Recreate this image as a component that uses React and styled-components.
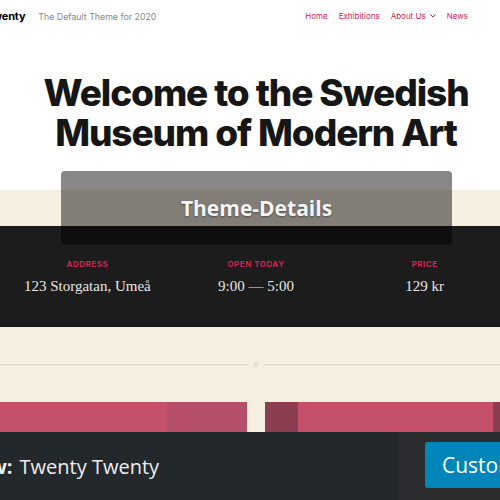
import styled, { createGlobalStyle } from 'styled-components';

const Global = createGlobalStyle`
  html, body { margin: 0; padding: 0; }
  body { width: 500px; height: 500px; overflow: hidden; background: #fff; }
`;

const Screen = styled.div`
  width: 500px;
  height: 500px;
  display: flex;
  flex-direction: column;
  overflow: hidden;
  position: relative;
`;

const Site = styled.div`
  flex: 1;
  width: 512px;
  overflow: hidden;
  position: relative;
`;

const Header = styled.header`
  height: 32px;
  display: flex;
  align-items: center;
  font-family: Inter, "Liberation Sans", sans-serif;
  font-size: 8px;
  padding-right: 44px;
`;

const SiteTitle = styled.div`
  font-weight: 700;
  font-size: 11px;
  color: #000;
  margin-left: -55px;
  letter-spacing: -0.2px;
`;

const Tagline = styled.div`
  color: #888;
  font-size: 8.8px;
  margin-left: 13px;
`;

const Nav = styled.nav`
  margin-left: auto;
  display: flex;
  gap: 11px;
  color: #cd2653;
`;

const NavItem = styled.span`
  display: flex;
  align-items: center;
  gap: 4px;
`;

const Hero = styled.div`
  padding: 41px 0 37px;
  text-align: center;
`;

const Title = styled.h1`
  margin: 0;
  font-family: Inter, "Liberation Sans", sans-serif;
  font-weight: 800;
  font-size: 37px;
  line-height: 40px;
  letter-spacing: -1.1px;
  color: #161616;
`;

const Cream = styled.div`
  background: #f5efe0;
  padding-top: 36px;
`;

const InfoBand = styled.div`
  background: #1c1c1c;
  height: 101px;
  display: grid;
  grid-template-columns: repeat(3, 1fr);
  padding: 0 3px;
  box-sizing: border-box;
`;

const InfoCol = styled.div`
  display: flex;
  flex-direction: column;
  align-items: center;
  padding-top: 33px;
`;

const InfoLabel = styled.div`
  font-family: Inter, "Liberation Sans", sans-serif;
  font-weight: 700;
  font-size: 8px;
  letter-spacing: 0.5px;
  color: #cd2653;
`;

const InfoValue = styled.div`
  font-family: "Liberation Serif", serif;
  font-size: 15px;
  color: #e6e6e6;
  margin-top: 9px;
`;

const DividerRow = styled.div`
  height: 75px;
  display: flex;
  align-items: center;
  gap: 6px;
  color: #c8c2b2;
  font-family: "Liberation Sans", sans-serif;
  font-size: 8px;
  font-style: italic;
`;

const Line = styled.div`
  flex: 1;
  height: 1px;
  background: #dcd7ca;
`;

const Cover = styled.div`
  display: flex;
  height: 40px;
`;

const Block = styled.div`
  width: ${p => p.w}px;
  background: ${p => p.c};
  flex-shrink: 0;
`;

const Overlay = styled.div`
  position: absolute;
  left: 61px;
  top: 171px;
  width: 391px;
  height: 74px;
  border-radius: 4px;
  background: rgba(0, 0, 0, 0.47);
  display: flex;
  align-items: center;
  justify-content: center;
  font-family: "Open Sans", "Noto Sans", sans-serif;
  font-weight: 700;
  font-size: 21px;
  color: #f4f4f4;
  text-shadow: 0 1px 2px rgba(0,0,0,0.4);
`;

const Footer = styled.footer`
  height: 68px;
  flex-shrink: 0;
  display: flex;
  background: #23282d;
`;

const FooterName = styled.div`
  flex: 1;
  display: flex;
  align-items: center;
  font-family: "Open Sans", "Noto Sans", sans-serif;
  font-size: 20px;
  color: #eee;
  margin-left: -73px;
  white-space: pre;
  b { font-weight: 700; margin-right: 7px; }
`;

const FooterActions = styled.div`
  width: 103px;
  background: #2a2c2e;
  display: flex;
  align-items: center;
  padding-left: 28px;
  box-sizing: border-box;
  overflow: hidden;
`;

const CustomizeButton = styled.button`
  flex-shrink: 0;
  height: 46px;
  padding: 0 17px;
  border: none;
  border-radius: 3px;
  background: #0085ba;
  color: #fff;
  font-family: "Open Sans", "Noto Sans", sans-serif;
  font-size: 21px;
  margin-top: -2px;
`;

const Chevron = () => (
  <svg width="6" height="4" viewBox="0 0 6 4">
    <path d="M0.5 0.5 L3 3 L5.5 0.5" fill="none" stroke="#cd2653" strokeWidth="1" />
  </svg>
);

export default function App() {
  return (
    <>
      <Global />
      <Screen>
        <Site>
          <Header>
            <SiteTitle>Twenty Twenty</SiteTitle>
            <Tagline>The Default Theme for 2020</Tagline>
            <Nav>
              <NavItem>Home</NavItem>
              <NavItem>Exhibitions</NavItem>
              <NavItem>About Us <Chevron /></NavItem>
              <NavItem>News</NavItem>
            </Nav>
          </Header>
          <Hero>
            <Title>Welcome to the Swedish<br />Museum of Modern Art</Title>
          </Hero>
          <Cream>
            <InfoBand>
              <InfoCol>
                <InfoLabel>ADDRESS</InfoLabel>
                <InfoValue>123 Storgatan, Umeå</InfoValue>
              </InfoCol>
              <InfoCol>
                <InfoLabel>OPEN TODAY</InfoLabel>
                <InfoValue>9:00 — 5:00</InfoValue>
              </InfoCol>
              <InfoCol>
                <InfoLabel>PRICE</InfoLabel>
                <InfoValue>129 kr</InfoValue>
              </InfoCol>
            </InfoBand>
            <DividerRow>
              <Line />
              <span>//</span>
              <Line />
            </DividerRow>
            <Cover>
              <Block w={167} c="#c5506a" />
              <Block w={80} c="#b6506a" />
              <Block w={18} c="#f5efe0" />
              <Block w={33} c="#8a3e50" />
              <Block w={195} c="#c5506a" />
              <Block w={19} c="#8a3e50" />
            </Cover>
          </Cream>
          <Overlay>Theme-Details</Overlay>
        </Site>
        <Footer>
          <FooterName><b>Preview:</b>Twenty Twenty</FooterName>
          <FooterActions>
            <CustomizeButton>Customize</CustomizeButton>
          </FooterActions>
        </Footer>
      </Screen>
    </>
  );
}
